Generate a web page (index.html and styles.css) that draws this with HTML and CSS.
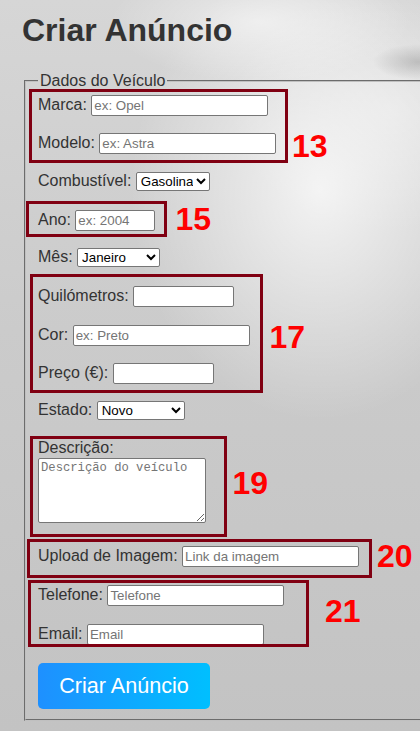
FILE: index.html
```html
<!DOCTYPE html>
<html lang="pt">
<head>
<meta charset="utf-8">
<title>Criar Anúncio</title>
<link rel="stylesheet" href="styles.css">
</head>
<body>
<div class="page">
  <h1 class="title">Criar Anúncio</h1>
  <form class="ad-form">
    <fieldset class="vehicle">
      <legend class="vehicle-legend">Dados do Veículo</legend>
      <div class="fields">
        <div class="rows">
          <div class="row"><label>Marca:</label><input class="input-long" type="text" placeholder="ex: Opel"></div>
          <div class="row"><label>Modelo:</label><input class="input-long" type="text" placeholder="ex: Astra"></div>
          <div class="row"><label>Combustível:</label><select class="select-fuel"><option>Gasolina</option><option>Gasóleo</option></select></div>
          <div class="row"><label>Ano:</label><input class="input-year" type="text" placeholder="ex: 2004"></div>
          <div class="row"><label>Mês:</label><select class="select-month"><option>Janeiro</option><option>Fevereiro</option></select></div>
          <div class="row"><label>Quilómetros:</label><input class="input-short" type="text"></div>
          <div class="row"><label>Cor:</label><input class="input-long" type="text" placeholder="ex: Preto"></div>
          <div class="row"><label>Preço (€):</label><input class="input-short" type="text"></div>
          <div class="row"><label>Estado:</label><select class="select-state"><option>Novo</option><option>Usado</option></select></div>
        </div>
        <div class="desc">
          <label class="desc-label">Descrição:</label>
          <textarea class="desc-text" placeholder="Descrição do veículo"></textarea>
        </div>
        <div class="rows rows-contact">
          <div class="row"><label>Upload de Imagem:</label><input class="input-long" type="text" placeholder="Link da imagem"></div>
          <div class="row"><label>Telefone:</label><input class="input-long" type="text" placeholder="Telefone"></div>
          <div class="row"><label>Email:</label><input class="input-long" type="text" placeholder="Email"></div>
        </div>
        <button class="submit" type="button">Criar Anúncio</button>
      </div>
    </fieldset>
  </form>

  <div class="annotations">
    <div class="note-box box-13"></div>
    <div class="note-num num-13">13</div>
    <div class="note-box box-15"></div>
    <div class="note-num num-15">15</div>
    <div class="note-box box-17"></div>
    <div class="note-num num-17">17</div>
    <div class="note-box box-19"></div>
    <div class="note-num num-19">19</div>
    <div class="note-box box-20"></div>
    <div class="note-num num-20">20</div>
    <div class="note-box box-21"></div>
    <div class="note-num num-21">21</div>
  </div>
</div>
</body>
</html>
```

FILE: styles.css
```css
html, body {
  margin: 0;
  padding: 0;
  overflow: hidden;
}

body {
  font-family: "Liberation Sans", Arial, sans-serif;
  color: #333;
  min-height: 731px;
  background:
    radial-gradient(ellipse 45px 18px at 418px 62px, rgba(120,120,120,0.35), rgba(120,120,120,0) 100%),
    radial-gradient(ellipse 150px 60px at 260px 22px, rgba(255,255,255,0.55), rgba(255,255,255,0) 100%),
    radial-gradient(ellipse 190px 230px at 320px 190px, rgba(255,255,255,0.75), rgba(255,255,255,0) 100%),
    radial-gradient(ellipse 160px 120px at 390px 110px, rgba(255,255,255,0.35), rgba(255,255,255,0) 100%),
    linear-gradient(180deg, #d6d6d6 0%, #cbcbcb 45%, #c3c3c3 100%);
}

.page {
  position: relative;
  padding: 12px 0 10px 22px;
  min-height: 709px;
  overflow: hidden;
}

.title {
  margin: 0 0 23px;
  font-size: 32px;
  line-height: 37px;
  font-weight: bold;
  color: #333;
}

.ad-form {
  margin: 0;
}

.vehicle {
  margin: 0 0 0 2px;
  width: 480px;
  padding: 5px 12px 10px;
  border: 2px groove #c0c0c0;
}

.vehicle-legend {
  padding: 0 2px;
  font-size: 16px;
  line-height: 18px;
  color: #333;
}

.fields {
  display: flex;
  flex-direction: column;
  align-items: flex-start;
}

.rows {
  display: flex;
  flex-direction: column;
  gap: 17.3px;
}

.rows-contact {
  gap: 18px;
  margin-top: 23.3px;
}

.row {
  display: flex;
  align-items: baseline;
  gap: 4.45px;
  height: 21px;
  font-size: 16px;
  color: #333;
}

.row label {
  white-space: nowrap;
}

input, select, textarea, button {
  font-family: "Liberation Sans", Arial, sans-serif;
}

input {
  box-sizing: border-box;
  height: 21px;
  padding: 1px 2px;
  font-size: 13.33px;
  color: #000;
  background: #fff;
  border: 1px solid #767676;
  border-radius: 2px;
}

input::placeholder,
textarea::placeholder {
  color: #757575;
}

.input-long { width: 177px; }
.input-short { width: 101px; }
.input-year { width: 80px; }

select {
  box-sizing: border-box;
  height: 19px;
  font-size: 13.33px;
  color: #000;
  background: #fff;
  border: 1px solid #767676;
  border-radius: 2px;
}

.select-fuel { width: 74px; }
.select-month { width: 83px; }
.select-state { width: 88px; }

.desc {
  display: flex;
  flex-direction: column;
  align-items: flex-start;
  margin-top: 16.3px;
}

.desc-label {
  font-size: 16px;
  line-height: 18px;
  color: #333;
}

.desc-text {
  display: block;
  box-sizing: border-box;
  width: 168px;
  height: 65px;
  margin: 1px 0 0;
  padding: 2px;
  font-family: "Liberation Mono", "Courier New", monospace;
  font-size: 12.2px;
  background: #fff;
  border: 1px solid #767676;
  border-radius: 2px;
}

.submit {
  margin-top: 18px;
  width: 172px;
  height: 46px;
  padding: 0;
  border: none;
  border-radius: 5px;
  background: linear-gradient(90deg, #1e90ff 0%, #00bfff 100%);
  color: #fff;
  font-size: 21.6px;
  cursor: pointer;
}

/* annotation overlay */
.annotations {
  position: absolute;
  top: 0;
  left: 0;
  width: 420px;
  height: 731px;
  pointer-events: none;
}

.note-box {
  position: absolute;
  box-sizing: border-box;
  border: 3px solid #800012;
}

.box-13 { left: 29px; top: 89px; width: 259px; height: 74px; }
.box-15 { left: 26px; top: 201px; width: 141px; height: 36px; }
.box-17 { left: 30px; top: 274px; width: 233px; height: 119px; }
.box-19 { left: 30px; top: 436px; width: 197px; height: 101px; }
.box-20 { left: 27px; top: 539px; width: 345px; height: 39px; }
.box-21 { left: 28px; top: 580px; width: 281px; height: 67px; }

.note-num {
  position: absolute;
  font-size: 32px;
  line-height: 37px;
  font-weight: bold;
  color: #ff0000;
}

.num-13 { left: 292px; top: 128px; }
.num-15 { left: 175.5px; top: 201px; }
.num-17 { left: 269.5px; top: 319px; }
.num-19 { left: 232.5px; top: 465px; }
.num-20 { left: 377px; top: 538px; }
.num-21 { left: 325px; top: 593px; }
```
